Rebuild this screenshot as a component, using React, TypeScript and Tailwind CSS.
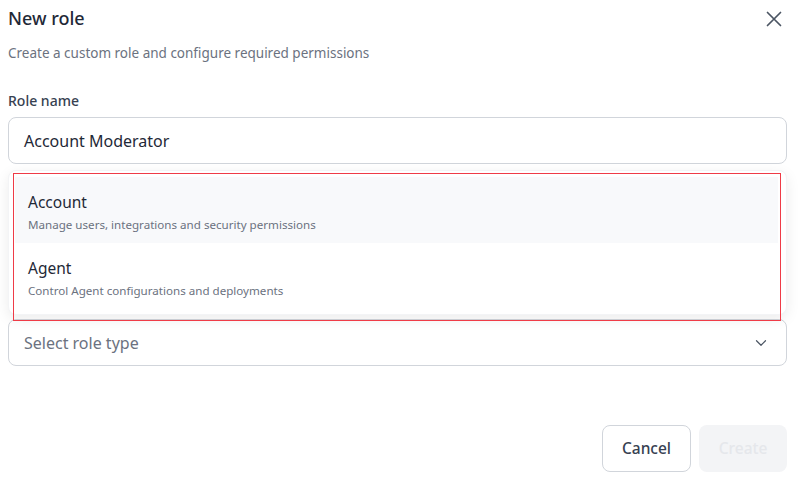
import { ChevronDown } from 'lucide-react';

const roleTypes = [
  { name: 'Account', description: 'Manage users, integrations and security permissions' },
  { name: 'Agent', description: 'Control Agent configurations and deployments' },
];

export default function App() {
  return (
    <div
      className="w-[803px] h-[482px] bg-white overflow-hidden pl-[8px] pr-[16px] flex flex-col text-[#111827]"
      style={{ fontFamily: '"Noto Sans", "Open Sans", Arial, sans-serif' }}
    >
      {/* Header */}
      <div className="flex items-center justify-between h-[36px] pt-[1px]">
        <h2 className="text-[18px] font-medium text-[#1f2937]">New role</h2>
        <button className="mr-[5px] text-[#4b5563]">
          <svg width="16" height="16" viewBox="0 0 16 16" fill="none" stroke="currentColor" strokeWidth="1.7" strokeLinecap="round">
            <path d="M1.5 1.5l13 13M14.5 1.5l-13 13" />
          </svg>
        </button>
      </div>
      <p className="mt-[7px] text-[13.5px] text-[#6b7280]">Create a custom role and configure required permissions</p>

      {/* Role name */}
      <label className="mt-[27px] text-[14px] font-medium text-[#374151]">Role name</label>
      <div className="mt-[6px] h-[47px] rounded-lg border border-[#d1d5db] flex items-center px-[15px] text-[16px] text-[#1f2937]">
        Account Moderator
      </div>

      {/* Role type */}
      <div className="relative mt-[155px]">
        <div className="absolute bottom-full left-0 right-0 mb-[4px] rounded-lg bg-white border border-[#f3f4f6] shadow-[0_4px_14px_rgba(0,0,0,0.08)] pl-[6px] pr-[8px] pt-[6px] pb-[5px]">
          {roleTypes.map((role, i) => (
            <div key={role.name} className={`h-[66px] pl-[13px] pt-[14px] ${i === 0 ? 'bg-[#f8f9fb]' : ''}`}>
              <div className="text-[15.5px] leading-[22px] text-[#1f2937]">{role.name}</div>
              <div className="text-[11.6px] leading-[18px] mt-[3px] text-[#6b7280]">{role.description}</div>
            </div>
          ))}
        </div>
        <div className="h-[47px] rounded-lg border border-[#d1d5db] flex items-center justify-between pl-[15px] pr-[16px] text-[16px] text-[#6b7280]">
          <span>Select role type</span>
          <ChevronDown className="w-[18px] h-[18px] text-[#4b5563]" strokeWidth={1.6} />
        </div>
        {/* annotation frame */}
        <div className="absolute left-[5px] right-[6px] top-[-146px] h-[148px] border border-[#ef3b47] pointer-events-none" />
      </div>

      {/* Footer */}
      <div className="mt-auto mb-[10px] flex justify-end gap-[8px]">
        <button className="w-[89px] h-[47px] rounded-lg border border-[#d1d5db] bg-white text-[15.5px] font-medium text-[#374151]">
          Cancel
        </button>
        <button className="w-[88px] h-[47px] rounded-lg bg-[#f3f4f6] text-[15.5px] font-medium text-[#e5e7eb]">
          Create
        </button>
      </div>
    </div>
  );
}
